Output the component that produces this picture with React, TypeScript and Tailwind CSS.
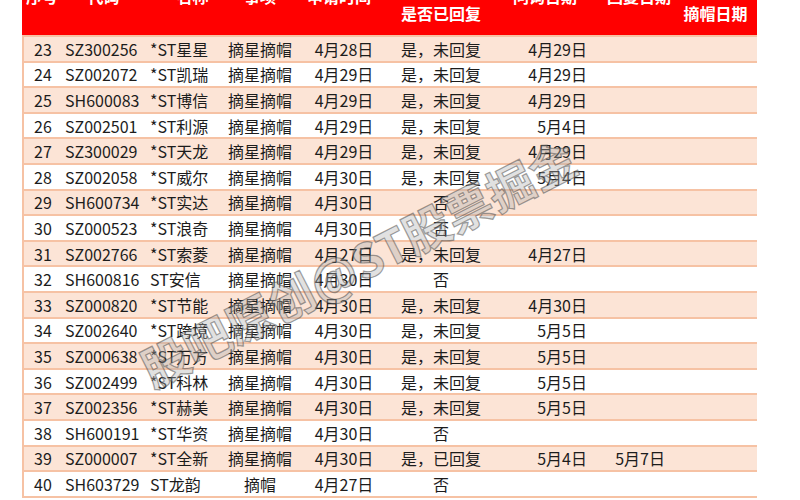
import React from 'react'

type Row = {
  no: number
  code: string
  name: string
  item: string
  applied: string
  replied: string
  asked?: string
  answered?: string
}

const ROWS: Row[] = [
  { no: 23, code: 'SZ300256', name: '*ST星星', item: '摘星摘帽', applied: '4月28日', replied: '是，未回复', asked: '4月29日' },
  { no: 24, code: 'SZ002072', name: '*ST凯瑞', item: '摘星摘帽', applied: '4月29日', replied: '是，未回复', asked: '4月29日' },
  { no: 25, code: 'SH600083', name: '*ST博信', item: '摘星摘帽', applied: '4月29日', replied: '是，未回复', asked: '4月29日' },
  { no: 26, code: 'SZ002501', name: '*ST利源', item: '摘星摘帽', applied: '4月29日', replied: '是，未回复', asked: '5月4日' },
  { no: 27, code: 'SZ300029', name: '*ST天龙', item: '摘星摘帽', applied: '4月29日', replied: '是，未回复', asked: '4月29日' },
  { no: 28, code: 'SZ002058', name: '*ST威尔', item: '摘星摘帽', applied: '4月30日', replied: '是，未回复', asked: '5月4日' },
  { no: 29, code: 'SH600734', name: '*ST实达', item: '摘星摘帽', applied: '4月30日', replied: '否' },
  { no: 30, code: 'SZ000523', name: '*ST浪奇', item: '摘星摘帽', applied: '4月30日', replied: '否' },
  { no: 31, code: 'SZ002766', name: '*ST索菱', item: '摘星摘帽', applied: '4月27日', replied: '是，未回复', asked: '4月27日' },
  { no: 32, code: 'SH600816', name: 'ST安信', item: '摘星摘帽', applied: '4月30日', replied: '否' },
  { no: 33, code: 'SZ000820', name: '*ST节能', item: '摘星摘帽', applied: '4月30日', replied: '是，未回复', asked: '4月30日' },
  { no: 34, code: 'SZ002640', name: '*ST跨境', item: '摘星摘帽', applied: '4月30日', replied: '是，未回复', asked: '5月5日' },
  { no: 35, code: 'SZ000638', name: '*ST万方', item: '摘星摘帽', applied: '4月30日', replied: '是，未回复', asked: '5月5日' },
  { no: 36, code: 'SZ002499', name: '*ST科林', item: '摘星摘帽', applied: '4月30日', replied: '是，未回复', asked: '5月5日' },
  { no: 37, code: 'SZ002356', name: '*ST赫美', item: '摘星摘帽', applied: '4月30日', replied: '是，未回复', asked: '5月5日' },
  { no: 38, code: 'SH600191', name: '*ST华资', item: '摘星摘帽', applied: '4月30日', replied: '否' },
  { no: 39, code: 'SZ000007', name: '*ST全新', item: '摘星摘帽', applied: '4月30日', replied: '是，已回复', asked: '5月4日', answered: '5月7日' },
  { no: 40, code: 'SH603729', name: 'ST龙韵', item: '摘帽', applied: '4月27日', replied: '否' },
]

const font = "font-['Noto_Sans_CJK_SC','Noto_Sans',sans-serif]"

export default function App() {
  return (
    <div className={`relative h-[500px] w-[800px] overflow-hidden bg-white ${font}`}>
      <div className="ml-[22px] w-[735px]">
        {/* header, top cropped off in the screenshot */}
        <div className="-mt-[26px] flex h-[61px] bg-[#ff0000] text-[16px] font-bold leading-[20px] text-white">
          <div className="w-[40px] pt-[12px] text-center">序号</div>
          <div className="w-[83px] pt-[12px] text-center">代码</div>
          <div className="w-[77px] pt-[12px] pl-[18px] text-center">名称</div>
          <div className="w-[76px] pt-[12px] text-center">事项</div>
          <div className="w-[92px] pt-[12px] pr-[10px] text-center">申请时间</div>
          <div className="w-[102px] pt-[29px] text-center">是否已回复</div>
          <div className="w-[106px] pt-[12px] text-center">问询日期</div>
          <div className="w-[82px] pt-[12px] text-center">回复日期</div>
          <div className="w-[77px] pt-[29px] pr-[6px] text-center">摘帽日期</div>
        </div>

        <div className="border-l-2 border-t-2 border-[#f6c2a4]">
          {ROWS.map((r, i) => (
            <div
              key={r.no}
              className={`flex h-[25.6px] items-center border-b-2 border-[#f6c2a4] text-[16px] leading-none text-[#1c1c1c] ${
                i % 2 === 0 ? 'bg-[#fce4d6]' : 'bg-white'
              }`}
            >
              <div className="w-[38px] text-center">{r.no}</div>
              <div className="w-[83px] pl-[3px]">{r.code}</div>
              <div className="w-[77px] pl-[5px]">{r.name}</div>
              <div className="w-[76px] text-center">{r.item}</div>
              <div className="w-[92px] text-center">{r.applied}</div>
              <div className="w-[102px] text-center">{r.replied}</div>
              <div className="w-[106px] pr-[11px] text-right">{r.asked}</div>
              <div className="w-[82px] pr-[15px] text-right">{r.answered}</div>
              <div className="w-[77px]" />
            </div>
          ))}
        </div>
      </div>

      {/* watermark */}
      <div className="pointer-events-none absolute left-[358px] top-[262px] -translate-x-1/2 -translate-y-1/2 rotate-[-27deg] whitespace-nowrap text-[47px] font-bold text-[rgba(175,175,175,0.4)] [-webkit-text-stroke:1.2px_rgba(70,70,70,0.5)]">
        股吧原创@ST股票掘金
      </div>
    </div>
  )
}
